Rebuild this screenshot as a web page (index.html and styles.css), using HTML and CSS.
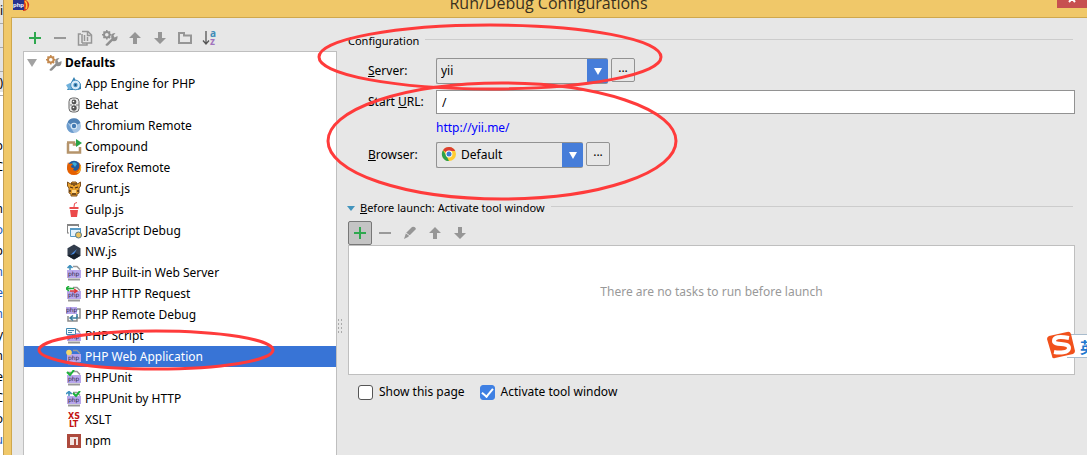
FILE: index.html
```html
<!DOCTYPE html>
<html lang="en">
<head>
<meta charset="utf-8">
<title>Run/Debug Configurations</title>
<link rel="stylesheet" href="styles.css">
</head>
<body>
<svg class="defs" aria-hidden="true">
  <defs>
    <symbol id="plus" viewBox="0 0 16 16"><path d="M8 2v12M2 8h12" stroke="#2fa84f" stroke-width="2" fill="none"/></symbol>
    <symbol id="minus" viewBox="0 0 16 16"><path d="M2 8h12" stroke="#999" stroke-width="2"/></symbol>
    <symbol id="up" viewBox="0 0 16 16"><path d="M8 2l6 6h-4v6H6V8H2z" fill="#969696"/></symbol>
    <symbol id="down" viewBox="0 0 16 16"><path d="M8 14l6-6h-4V2H6v6H2z" fill="#969696"/></symbol>
    <symbol id="copy" viewBox="0 0 16 16"><path d="M4 4H1.500v11H10V13.500M5 1.500h6l3.500 3.500v8H5M10.500 2v3.500h3M5 4v9M7.500 5v6M10.500 7v4" stroke="#969696" stroke-width="1.500" fill="none"/></symbol>
    <symbol id="folder" viewBox="0 0 16 16"><path d="M2 3h5v2.500h7V13H2z" stroke="#969696" stroke-width="2" fill="none"/></symbol>
    <symbol id="edit" viewBox="0 0 16 16"><path d="M2 14l2-6 6-6q3-1 4 2l-8 8z" fill="#969696"/><path d="M4 8l4 3" stroke="#e7e7e7"/></symbol>
    <symbol id="wrench" viewBox="0 0 16 16"><path d="M3.500 14.500L9.500 8.500Q8 3 13.500 3L11.500 5.500l1 2 3-1.500q.5 6-5 5l-4.500 4.500q-2.500 1-2.500-1z" fill="#909090"/><circle cx="4.800" cy="4.800" r="2.800" fill="none" stroke="currentColor" stroke-width="2"/><path d="M4.800 0v2M4.800 7.600v2M0 4.800h2M7.600 4.800h2M1.500 1.500l1.400 1.400M8.100 1.500L6.700 2.900M1.500 8.100l1.400-1.400M8.100 8.100L6.700 6.700" stroke="currentColor" stroke-width="1.500"/></symbol>
    <symbol id="sort" viewBox="0 0 16 16"><path d="M4 1v12M1 10.500l3 3.500 3-3.500" stroke="#555" stroke-width="1.300" fill="none"/><text x="8" y="7" class="glyph" fill="#3f8db8">a</text><text x="8" y="15" class="glyph" fill="#a173bd">z</text></symbol>
    <symbol id="chrome" viewBox="0 0 16 16"><circle cx="8" cy="8" r="7" fill="#fc3"/><path d="M8 8L2 4.200A7 7 0 0 1 14.200 5H8z" fill="#dc3f32"/><path d="M2 4.200L5.300 9.500 8 15A7 7 0 0 1 2 4.200z" fill="#2da14a"/><circle cx="8" cy="8" r="3.400" fill="#fff"/><circle cx="8" cy="8" r="2.500" fill="#3b7bd1"/></symbol>
    <symbol id="php" viewBox="0 0 16 16"><path d="M7 1.500h4l3 3M2 2.500h3" stroke="#989898" stroke-width="1.500" fill="none"/><path d="M2 13.500h12v2H2z" fill="#989898"/><path d="M1 5h14v8H1z" fill="#b8a6ec"/><text x="2" y="11" class="php">php</text></symbol>
    <symbol id="engine" viewBox="0 0 16 16"><path d="M1 14L8 1l2 4 5 3v5l-3 1z" fill="#2f7eaf"/><path d="M0 9l4-2 3 5-4 2z" fill="#6fb1dc"/><circle cx="9.500" cy="9" r="4.800" fill="#d9ebf8" stroke="#4c93c3"/><circle cx="9.500" cy="9" r="2.200" fill="#4c93c3"/><circle cx="9.500" cy="9" r="1" fill="#174c75"/></symbol>
    <symbol id="behat" viewBox="0 0 16 16"><rect x="3" y="1" width="10" height="14" rx="3.500" fill="#eee" stroke="#666"/><circle cx="8" cy="5" r="2.400" fill="#555"/><circle cx="8" cy="11" r="2.700" fill="#555"/><path d="M4 8h2M10 8h3" stroke="#777"/><circle cx="7.500" cy="4.500" r=".8" fill="#fff"/><circle cx="7.500" cy="10.500" r=".8" fill="#fff"/></symbol>
    <symbol id="chromium" viewBox="0 0 16 16"><circle cx="8" cy="8" r="7" fill="#a3c3e4"/><path d="M8 8L1.500 4.500A7 7 0 0 1 14.500 5z" fill="#4f81b5"/><path d="M1.500 4.500L5 10l3 5a7 7 0 0 1-6.500-10.500z" fill="#6d9dce"/><circle cx="8" cy="8" r="3.200" fill="#dcebf8"/><circle cx="8" cy="8" r="2.200" fill="#4279b2"/></symbol>
    <symbol id="compound" viewBox="0 0 16 16"><path d="M2 4v9.500h12V8M1 3.500h7v2h3" fill="none" stroke="#b5946b" stroke-width="2.500"/><path d="M10 0l6 4-6 4z" fill="#29a346"/></symbol>
    <symbol id="firefox" viewBox="0 0 16 16"><circle cx="8" cy="7.500" r="6.800" fill="#24599d"/><path d="M6 3q3-2 5 1l-2 3z" fill="#3dacd9"/><path d="M2 2l1 2q2-1 4 0L5 6q0 2 3 2l-1 2q4 2 6-2 1-4-1-6 4 3 3 7-1 6-7 6T1 9q0-4 1-7z" fill="#e66000"/><path d="M14 5q1 6-4 8 5 0 5-6z" fill="#ffc72b"/></symbol>
    <symbol id="grunt" viewBox="0 0 16 16"><path d="M1.500 1l3 2 1.500-2h4l1.500 2 3-2v4L13 7v5l-2 1v2H5v-2l-2-1V7L1.500 5z" fill="#e8a02c" stroke="#80511d"/><path d="M4 6l3 1M12 6L9 7M6 13h4M8 2v3M3 10h2M13 10h-2M6 2v2M10 2v2" stroke="#4f3016" stroke-width="1.300"/><path d="M6 9h4v3H6z" fill="#ffd588"/></symbol>
    <symbol id="gulp" viewBox="0 0 16 16"><path d="M3.500 5h9v2h-9zM4 8h8l-1 7H5z" fill="#eb4a4b"/><path d="M8 5l.5-3.500L11 .5" stroke="#eb4a4b" fill="none"/></symbol>
    <symbol id="jsdebug" viewBox="0 0 16 16"><path d="M1.500 10V1.500h11V4M1 10h2" fill="none" stroke="#858585"/><path d="M1 1h12v2H1z" fill="#858585"/><path d="M4.500 5.500h10v8h-10z" fill="#e4f2fb" stroke="#579ac4"/><path d="M4 5h11v2H4z" fill="#579ac4"/><circle cx="12.500" cy="12" r="3" fill="#edc25e" stroke="#547d91"/></symbol>
    <symbol id="nw" viewBox="0 0 16 16"><path d="M8 .5l6.500 3.700v7.500L8 15.500l-6.500-3.800V4.200z" fill="#323d4c"/><path d="M1.500 11.700L8 8l6.500 3.700L8 15.500z" fill="#17202b"/><path d="M4 11l7-6-3 5z" fill="#4b88d9"/></symbol>
    <symbol id="xslt" viewBox="0 0 16 16"><text x="2" y="7" class="xslt">XS</text><text x="3" y="15" class="xslt">LT</text></symbol>
    <symbol id="npm" viewBox="0 0 16 16"><path d="M1 1h14v14H1z" fill="#ad4a3d"/><path d="M4 4h8v8h-2V6H8v6H4z" fill="#f1e4e1"/></symbol>
  </defs>
</svg>

<div class="desktop">
  <div class="behind" aria-hidden="true">
    <div class="behind-top"><span>i</span><span></span><span></span><span>)</span></div>
    <div class="behind-lines"><span>p</span><span>C</span><span></span><span>n</span><span class="blue">o</span><span>p</span><span class="blue">n</span><span class="blue">e</span><span class="blue">n</span><span>y</span><span>n</span><span>e</span><span>C</span><span>o</span><span class="blue">u</span></div>
  </div>
  <div class="window">
    <header class="titlebar">
      <svg class="app-logo" viewBox="0 0 17 12" aria-hidden="true"><path d="M10 0h3q4 3 3 6-1 5-6 5z" fill="#d83d20"/><path d="M12 1q3 3 1 8" stroke="#ffca3b" stroke-width="1.500" fill="none"/><path d="M0 0h11v10H0z" fill="#26348f"/><text x="0" y="7" class="logo-text">php</text></svg>
      <h1>Run/Debug Configurations</h1>
      <button class="close" aria-label="Close"><svg viewBox="0 0 8 8"><path d="M1 0l6 7M7 0L1 7" stroke="#fff" stroke-width="2"/></svg></button>
    </header>
    <div class="content">
      <aside class="sidebar">
        <div class="toolbar">
          <button aria-label="Add"><svg><use href="#plus"/></svg></button>
          <button aria-label="Remove"><svg><use href="#minus"/></svg></button>
          <button aria-label="Copy"><svg><use href="#copy"/></svg></button>
          <button aria-label="Edit defaults"><svg class="gray"><use href="#wrench"/></svg></button>
          <button aria-label="Move up"><svg><use href="#up"/></svg></button>
          <button aria-label="Move down"><svg><use href="#down"/></svg></button>
          <button aria-label="Create folder"><svg><use href="#folder"/></svg></button>
          <button aria-label="Sort"><svg><use href="#sort"/></svg></button>
        </div>
        <ul class="tree">
          <li class="root"><span class="arrow"></span><svg><use href="#wrench"/></svg>Defaults</li>
          <li><svg><use href="#engine"/></svg>App Engine for PHP</li>
          <li><svg><use href="#behat"/></svg>Behat</li>
          <li><svg><use href="#chromium"/></svg>Chromium Remote</li>
          <li><svg><use href="#compound"/></svg>Compound</li>
          <li><svg><use href="#firefox"/></svg>Firefox Remote</li>
          <li><svg><use href="#grunt"/></svg>Grunt.js</li>
          <li><svg><use href="#gulp"/></svg>Gulp.js</li>
          <li><svg><use href="#jsdebug"/></svg>JavaScript Debug</li>
          <li><svg><use href="#nw"/></svg>NW.js</li>
          <li><svg viewBox="0 0 16 16"><use href="#php"/><path d="M4 5V1M1.500 3L4 .5 6.500 3" stroke="#3e91bf" stroke-width="1.500" fill="none"/></svg>PHP Built-in Web Server</li>
          <li><svg viewBox="0 0 16 16"><use href="#php"/><path d="M8 2.500H1M3 0L0 2.500 3 5" stroke="#1eae38" stroke-width="1.500" fill="none"/><path d="M4 5h6M8 3l3 2-3 2" stroke="#dc3838" stroke-width="1.500" fill="none"/></svg>PHP HTTP Request</li>
          <li><svg viewBox="0 0 16 16"><path d="M11 2h3v9h-2M2 9v5h9V9" stroke="#8b8b8b" stroke-width="1.500" fill="none"/><path d="M0 0h11v7H0z" fill="#b8a6ec"/><text x="0" y="5" class="php">php</text><path d="M11 7v4H5M7 8.500l-3 2.500 3 2.500" stroke="#397d9e" stroke-width="1.500" fill="none"/></svg>PHP Remote Debug</li>
          <li><svg viewBox="0 0 16 16"><use href="#php"/><path d="M.5.500h9v6h-9z" fill="#eef8ff" stroke="#4289b2"/><path d="M2 2.500h6M2 4.500h4" stroke="#4289b2"/></svg>PHP Script</li>
          <li class="selected"><svg viewBox="0 0 16 16"><use href="#php"/><circle cx="3" cy="3.500" r="2.800" fill="#f4d86a"/></svg>PHP Web Application</li>
          <li><svg viewBox="0 0 16 16"><use href="#php"/><path d="M1 2l3 3 4-5" stroke="#1bb13a" stroke-width="2" fill="none"/></svg>PHPUnit</li>
          <li><svg viewBox="0 0 16 16"><use href="#php"/><path d="M3 5V1M0 3L3 .5 6 3" stroke="#3e91bf" stroke-width="1.500" fill="none"/><path d="M7 2l3 3 4-5" stroke="#1bb13a" stroke-width="2" fill="none"/></svg>PHPUnit by HTTP</li>
          <li><svg><use href="#xslt"/></svg>XSLT</li>
          <li><svg><use href="#npm"/></svg>npm</li>
        </ul>
      </aside>
      <div class="splitter" aria-hidden="true"><span></span></div>
      <main>
        <section>
          <h2 class="heading"><span>Configuration</span></h2>
          <div class="form">
            <label for="server"><u>S</u>erver:</label>
            <div class="field"><div class="combo server"><select id="server"><option>yii</option></select></div><button class="more" aria-label="Browse servers">...</button></div>
            <label for="url">Start <u>U</u>RL:</label>
            <input id="url" type="text" value="/">
            <a href="#">http://yii.me/</a>
            <label for="browser"><u>B</u>rowser:</label>
            <div class="field"><div class="combo browser"><svg><use href="#chrome"/></svg><select id="browser"><option>Default</option></select></div><button class="more" aria-label="Browse browsers">...</button></div>
          </div>
        </section>
        <section class="launch">
          <h2 class="heading"><i class="fold"></i><span><u>B</u>efore launch: Activate tool window</span></h2>
          <div class="toolbar tasks-toolbar">
            <button class="active" aria-label="Add task"><svg><use href="#plus"/></svg></button>
            <button aria-label="Remove task"><svg><use href="#minus"/></svg></button>
            <button aria-label="Edit task"><svg><use href="#edit"/></svg></button>
            <button aria-label="Move task up"><svg><use href="#up"/></svg></button>
            <button aria-label="Move task down"><svg><use href="#down"/></svg></button>
          </div>
          <div class="tasks">There are no tasks to run before launch</div>
          <div class="checks">
            <label><input type="checkbox">Show this page</label>
            <label><input type="checkbox" checked>Activate tool window</label>
          </div>
        </section>
      </main>
    </div>
  </div>
  <svg class="marks" aria-hidden="true"><ellipse cx="490" cy="57" rx="171" ry="32"/><ellipse cx="502" cy="141" rx="174" ry="58"/><ellipse cx="156" cy="350" rx="117" ry="19"/></svg>
  <div class="ime" lang="zh"><span>英</span><svg viewBox="0 0 28 28" aria-hidden="true"><path d="M2 5L20 1q3-1 4 2l4 17q0 2-2 3L8 27q-3 1-3-2L0 8q0-2 2-3z" fill="#f1511b"/><path d="M22 7Q7 4 7 10c0 5 15 1 15 7 0 5-10 5-15 4" fill="none" stroke="#fff" stroke-width="4"/></svg></div>
</div>
</body>
</html>
```

FILE: styles.css
```css
* { box-sizing: border-box; }
body {
  margin: 0;
  font: 12px/18px "Noto Sans", "Open Sans", "Noto Sans CJK SC", sans-serif;
  color: #000;
}
h1, h2, ul { margin: 0; padding: 0; font-size: inherit; font-weight: normal; }
button { padding: 0; border: 0; background: none; font: inherit; }
svg { display: block; flex: none; }
.defs { position: absolute; width: 0; height: 0; }
.glyph { font: bold 10px "Noto Sans", sans-serif; }
.php { font: 6px "DejaVu Sans", sans-serif; fill: #2d2744; }
.xslt { font: bold 8px "DejaVu Sans", sans-serif; fill: #c31313; }
.logo-text { font: bold 6px "Liberation Sans", sans-serif; fill: #fff; }

.desktop { position: relative; display: flex; height: 100vh; overflow: hidden; }
.behind { width: 3px; flex: none; overflow: hidden; background: #fff; }
.behind span { display: flex; justify-content: flex-end; height: 21px; line-height: 21px; }
.behind .blue { color: #2458b8; }
.behind-top { height: 92px; margin-bottom: 43px; background: #e3e3e3; }
.behind-top span { height: 24px; border-bottom: 1px solid #aaa; }
.window { flex: 1; min-width: 0; display: flex; flex-direction: column; padding-left: 7px; background: #f0c869; border-left: 1px solid #c4a055; }
.titlebar { display: flex; align-items: flex-start; height: 18px; flex: none; border-bottom: 1px solid #cfa84d; }
.app-logo { width: 17px; height: 12px; margin-left: 2px; }
.titlebar h1 { flex: 1; padding-left: 10px; text-align: center; font: 16px/6px "Open Sans", sans-serif; color: #3a3020; }
.close { display: flex; justify-content: center; width: 30px; height: 8px; overflow: hidden; background: #c75050; }
.close svg { width: 8px; height: 8px; margin-top: -5px; }

.content { flex: 1; min-height: 0; display: flex; padding: 0 12px 0 11px; background: #e7e7e7; border-left: 1px solid #cfa84d; }
.sidebar { flex: none; width: 314px; display: flex; flex-direction: column; }
.toolbar { display: flex; align-items: center; gap: 9px; }
.toolbar svg { width: 16px; height: 16px; }
.sidebar .toolbar { flex: none; height: 33px; padding: 7px 0 0 4px; }
.gray { color: #909090; }
.tree { flex: 1; min-height: 0; overflow: hidden; list-style: none; background: #fff; border: 1px solid #bfbfbf; border-bottom: 0; }
.tree li { display: flex; align-items: center; gap: 3px; height: 21px; padding-left: 42px; }
.tree svg { width: 16px; height: 16px; color: #c48a50; }
.tree .root { padding-left: 3px; font-weight: bold; }
.arrow { margin-right: 6px; border: 5px solid transparent; border-top: 8px solid #a2a2a2; border-bottom: 0; }
.tree .selected { background: #3874d6; color: #fff; }
.splitter { flex: none; width: 11px; padding-top: 300px; }
.splitter span { display: block; width: 5px; height: 15px; background: radial-gradient(circle, #aaa 1px, transparent 1px) 0 0 / 3px 4px; }

main { flex: 1; min-width: 0; padding-top: 14px; }
.heading { display: flex; align-items: center; font-size: 11px; }
.heading::after { content: ""; flex: 1; height: 1px; margin: 0 2px 3px 6px; background: #ccc; }
.form { display: grid; grid-template-columns: 68px 1fr; gap: 6px 0; align-items: center; padding: 8px 0 0 20px; }
.form a { grid-column: 2; line-height: 16px; color: #00f; text-decoration: none; }
.field { display: flex; gap: 3px; align-items: flex-start; }
.combo { position: relative; }
.combo::after { content: ""; position: absolute; right: 6px; top: 10px; border: 4px solid transparent; border-top: 7px solid #fff; border-bottom: 0; pointer-events: none; }
.combo svg { position: absolute; left: 5px; top: 4px; width: 16px; height: 16px; }
select {
  display: block; width: 100%; height: 26px; padding: 0 24px 0 4px;
  appearance: none; font: inherit; color: #000;
  border: 1px solid #929292; border-right: 0; border-radius: 2px;
  background: linear-gradient(#467dd9, #467dd9) right / 21px 100% no-repeat #e7e7e7;
}
.server { width: 172px; }
.browser { width: 147px; }
.browser select { padding-left: 24px; }
.more { width: 24px; height: 24px; border: 1px solid #929292; border-radius: 2px; line-height: 16px; padding-bottom: 4px; }
#url { width: 100%; height: 24px; padding: 0 5px; border: 1px solid #929292; background: #fff; font: inherit; }
.launch { margin-top: 31px; }
.fold { margin: 0 5px 0 -1px; border: 4px solid transparent; border-top: 5px solid #4294bd; border-bottom: 0; }
.tasks-toolbar { height: 24px; margin-top: 4px; gap: 9px; }
.tasks-toolbar .active { margin-right: -4px; padding: 3px; border: 1px solid #777; border-radius: 2px; background: #c4c4c4; }
.tasks { height: 130px; padding-top: 37px; border: 1px solid #bfbfbf; background: #fff; color: #999; text-align: center; }
.checks { display: flex; gap: 15px; padding: 8px 0 0 10px; }
.checks label { display: flex; align-items: center; gap: 6px; }
.checks input { width: 15px; height: 15px; margin: 0; appearance: none; border: 1px solid #555; border-radius: 3px; background: #fff; }
.checks input:checked { display: grid; place-items: center; border-color: #3f80e3; background: #3f80e3; }
.checks input:checked::after { content: ""; width: 5px; height: 9px; margin-bottom: 2px; border: solid #fff; border-width: 0 2px 2px 0; transform: rotate(40deg); }

.marks { position: absolute; inset: 0; width: 100%; height: 100%; pointer-events: none; }
.marks ellipse { fill: none; stroke: #ff3b3b; stroke-width: 3; }
.ime { position: absolute; right: 0; top: 334px; width: 20px; height: 24px; border: solid #a9bccd; border-width: 1px 0; background: #fff; }
.ime span { position: absolute; left: 13px; top: 0; width: 7px; overflow: hidden; font: bold 15px/23px "Noto Sans CJK SC", sans-serif; color: #2177cf; }
.ime svg { position: absolute; right: 12px; top: -4px; width: 28px; height: 28px; }
```
